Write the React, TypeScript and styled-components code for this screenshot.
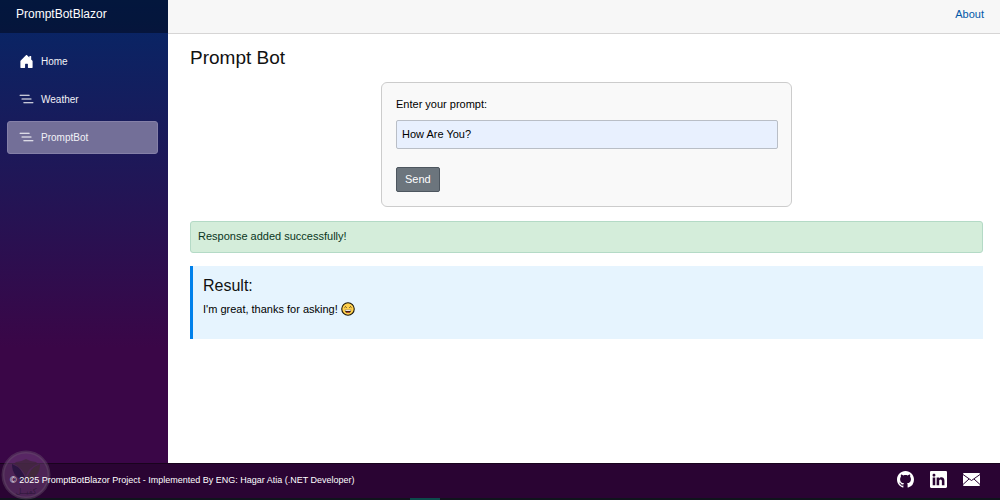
import React, { useState } from "react";
import styled, { createGlobalStyle } from "styled-components";
import {
  BsHouseDoorFill,
  BsListNested,
  BsGithub,
  BsLinkedin,
} from "react-icons/bs";

const GlobalStyle = createGlobalStyle`
  *, *::before, *::after { box-sizing: border-box; }
  body {
    margin: 0;
    background: #fff;
    color: #000;
    font-family: "Liberation Sans", Arial, sans-serif;
    font-size: 11px;
    line-height: 16px;
  }
  h1, h2, p { margin: 0; font-weight: 400; }
`;

const Shell = styled.div`
  display: flex;
  flex-direction: column;
  min-height: 100vh;
`;

const Page = styled.div`
  display: flex;
  flex: 1;
`;

const Sidebar = styled.aside`
  flex: 0 0 168px;
  background: linear-gradient(180deg, #052767 0%, #3a0647 75%);
`;

const Brand = styled.div`
  height: 33px;
  padding: 6px 16px;
  background: rgba(0, 0, 0, 0.4);

  a {
    color: #fff;
    font-size: 12px;
    text-decoration: none;
  }
`;

const Nav = styled.nav`
  display: flex;
  flex-direction: column;
  gap: 5px;
  padding: 12px 10px 12px 7px;
`;

const NavLink = styled.a<{ $active?: boolean }>`
  display: flex;
  align-items: center;
  gap: 7px;
  height: 33px;
  padding: 0 11px;
  border: 1px solid ${(p) => (p.$active ? "#8580a8" : "transparent")};
  border-radius: 3px;
  background: ${(p) => (p.$active ? "#736f98" : "transparent")};
  color: #f2f2f6;
  font-size: 10px;
  text-decoration: none;

  svg {
    width: 15px;
    height: 15px;
    color: #fff;
  }
`;

const Content = styled.main`
  flex: 1;
  min-width: 0;
`;

const TopRow = styled.header`
  display: flex;
  justify-content: flex-end;
  height: 34px;
  padding: 6px 16px;
  background: #f7f7f7;
  border-bottom: 1px solid #d6d5d5;

  a {
    color: #0257a8;
    text-decoration: none;
  }
`;

const Article = styled.article`
  display: flex;
  flex-direction: column;
  padding: 12px 17px 12px 22px;
`;

const Title = styled.h1`
  margin-bottom: 12px;
  color: #111;
  font-size: 19px;
  line-height: 24px;
`;

const PromptCard = styled.form`
  display: flex;
  flex-direction: column;
  align-items: flex-start;
  width: 100%;
  max-width: 411px;
  margin: 0 auto 14px;
  padding: 13px 13px 14px 14px;
  border: 1px solid #ccc;
  border-radius: 6px;
  background: #f9f9f9;
`;

const PromptInput = styled.input`
  width: 100%;
  height: 29px;
  margin: 8px 0 18px;
  padding: 0 5px 2px;
  border: 1px solid #b9bec6;
  border-radius: 2px;
  background: #e8f0fe;
  color: #000;
  font: inherit;
`;

const SendButton = styled.button`
  height: 25px;
  padding: 0 8px 2px;
  border: 1px solid #4d565f;
  border-radius: 2px;
  background: #6c757d;
  color: #fff;
  font: inherit;
`;

const Alert = styled.div`
  margin-bottom: 13px;
  padding: 6px 7px 8px;
  border: 1px solid #b4dac6;
  border-radius: 3px;
  background: #d4edda;
  color: #0a3622;
`;

const Result = styled.section`
  min-height: 73px;
  padding: 10px;
  border-left: 3px solid #0080ea;
  background: #e6f4fe;
`;

const ResultTitle = styled.h2`
  margin-bottom: 5px;
  color: #111;
  font-size: 16px;
  line-height: 20px;
`;

const ResultText = styled.p`
  display: flex;
  align-items: center;
  gap: 3px;

  svg {
    width: 14px;
    height: 14px;
  }
`;

const Footer = styled.footer`
  position: relative;
  display: flex;
  align-items: center;
  justify-content: space-between;
  height: 37px;
  padding: 0 20px 5px 10px;
  border-top: 1px solid #19031d;
  background: #2a0433;
  color: #fff;
  font-size: 9px;
  line-height: 12px;

  p { position: relative; }
`;

const Socials = styled.div`
  display: flex;
  align-items: center;
  gap: 16px;

  a { display: flex; color: #fff; }
  svg { width: 17px; height: 17px; }
`;

const Watermark = styled.svg`
  position: absolute;
  left: 1px;
  bottom: 0;
  width: 50px;
  height: 50px;
`;

const BottomEdge = styled.div`
  position: absolute;
  left: 0;
  right: 0;
  bottom: 0;
  height: 2px;
  background: linear-gradient(90deg, transparent 41%, #0c4a4b 41%, #0c4a4b 44%, transparent 44%) #10131d;
`;

function GrinningFace() {
  return (
    <svg viewBox="0 0 26 26" role="img" aria-label="Grinning face">
      <circle cx="13" cy="13" r="11.6" fill="#ffd04d" stroke="#181308" strokeWidth="2" />
      <path d="M6.500 10.500q2-3.500 4 0M15.500 10.500q2-3.500 4 0" fill="none" stroke="#251b0a" strokeWidth="1.5" />
      <path d="M7 14.500h12q-.7 6-6 6T7 14.500z" fill="#38200c" />
      <path d="M8 14.500h10v2H8z" fill="#fff" />
      <path d="M10 19q3-2 6 0-3 2-6 0z" fill="#d94b45" />
    </svg>
  );
}

function Envelope() {
  return (
    <svg viewBox="0 0 17 17" aria-hidden="true">
      <rect y="2" width="17" height="13" rx="1" fill="currentColor" />
      <path d="M0 3.500L8.500 9.500 17 3.500M0 13.500L6 8M17 13.500L11 8" fill="none" stroke="#2a0433" strokeWidth="1" />
    </svg>
  );
}

function KafiilMark() {
  return (
    <Watermark viewBox="0 0 50 50" aria-hidden="true">
      <circle cx="25" cy="25" r="23" fill="#a070a8" fillOpacity=".3" stroke="#66506a" strokeOpacity=".45" strokeWidth="3" />
      <path d="M15 12q5 0 10-3 5 3 10 3l2 2q-9 3-12 12Q20 17 13 14z" fill="#40263c" fillOpacity=".75" />
      <path d="M11 14q11 4 14 17-14-3-14-17z" fill="#24123d" fillOpacity=".8" />
      <path d="M39 14q-11 4-14 17 14-3 14-17z" fill="#402a35" fillOpacity=".8" />
      <text x="25" y="44" textAnchor="middle" fontFamily="DejaVu Sans, sans-serif" fontSize="8" fill="#2c1639" fillOpacity=".8">كفيــل</text>
    </Watermark>
  );
}

export default function App() {
  const [prompt, setPrompt] = useState("How Are You?");

  return (
    <>
      <GlobalStyle />
      <Shell>
        <Page>
          <Sidebar>
            <Brand><a href="#home">PromptBotBlazor</a></Brand>
            <Nav>
              <NavLink href="#home"><BsHouseDoorFill />Home</NavLink>
              <NavLink href="#weather"><BsListNested />Weather</NavLink>
              <NavLink href="#promptbot" $active aria-current="page"><BsListNested />PromptBot</NavLink>
            </Nav>
          </Sidebar>
          <Content>
            <TopRow><a href="#about">About</a></TopRow>
            <Article>
              <Title>Prompt Bot</Title>
              <PromptCard onSubmit={(e) => e.preventDefault()}>
                <label htmlFor="prompt">Enter your prompt:</label>
                <PromptInput id="prompt" type="text" value={prompt} onChange={(e) => setPrompt(e.target.value)} />
                <SendButton type="submit">Send</SendButton>
              </PromptCard>
              <Alert role="status">Response added successfully!</Alert>
              <Result>
                <ResultTitle>Result:</ResultTitle>
                <ResultText>I'm great, thanks for asking! <GrinningFace /></ResultText>
              </Result>
            </Article>
          </Content>
        </Page>
        <Footer>
          <BottomEdge />
          <KafiilMark />
          <p>© 2025 PromptBotBlazor Project - Implemented By ENG: Hagar Atia (.NET Developer)</p>
          <Socials>
            <a href="#github" aria-label="GitHub"><BsGithub /></a>
            <a href="#linkedin" aria-label="LinkedIn"><BsLinkedin /></a>
            <a href="#email" aria-label="Email"><Envelope /></a>
          </Socials>
        </Footer>
      </Shell>
    </>
  );
}
